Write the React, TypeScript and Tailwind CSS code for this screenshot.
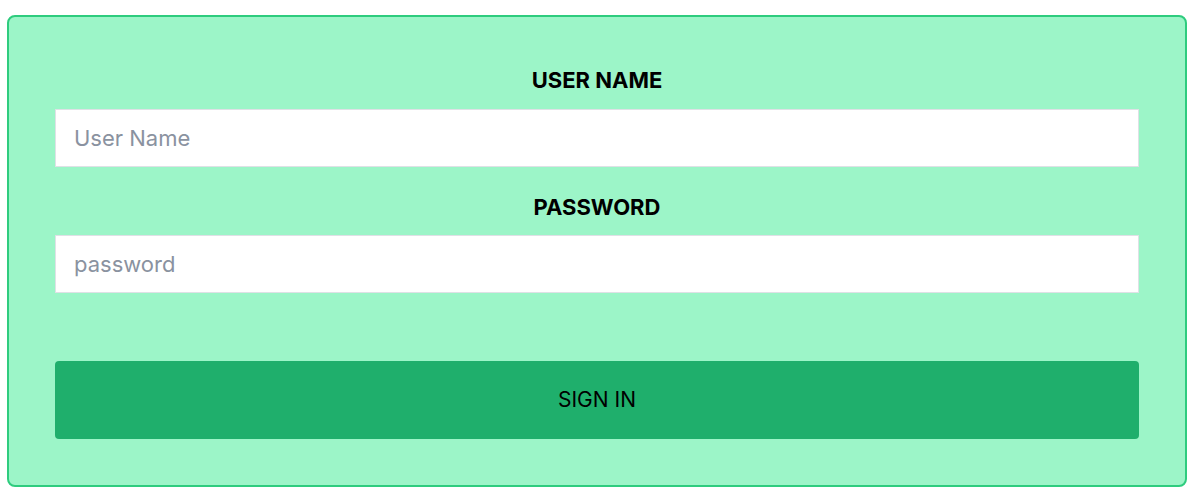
import React from 'react';

const App: React.FC = () => {
  return (
    <div className="w-[1200px] h-[503px] bg-white pt-[15px] pl-[7px] font-['Inter','Liberation_Sans',sans-serif]">
      <form
        className="w-[1180px] h-[472px] bg-[#9cf5c8] border-2 border-[#2ecc7e] rounded-lg px-[46px] pt-[49px] flex flex-col"
        onSubmit={(e) => e.preventDefault()}
      >
        <label className="text-center text-[22px] leading-[28px] font-bold text-black">USER NAME</label>
        <input
          type="text"
          placeholder="User Name"
          className="mt-[15px] h-[58px] w-full bg-white border border-[#dfe1e6] px-[18px] text-[22px] text-gray-800 placeholder:text-[#8a92a0] outline-none"
        />
        <label className="mt-[26px] text-center text-[22px] leading-[28px] font-bold text-black">PASSWORD</label>
        <input
          type="password"
          placeholder="password"
          className="mt-[14px] h-[58px] w-full bg-white border border-[#dfe1e6] px-[18px] text-[22px] text-gray-800 placeholder:text-[#8a92a0] outline-none"
        />
        <button
          type="submit"
          className="mt-[68px] h-[78px] w-full rounded bg-[#1faf6c] text-[21px] text-black"
        >
          SIGN IN
        </button>
      </form>
    </div>
  );
};

export default App;
